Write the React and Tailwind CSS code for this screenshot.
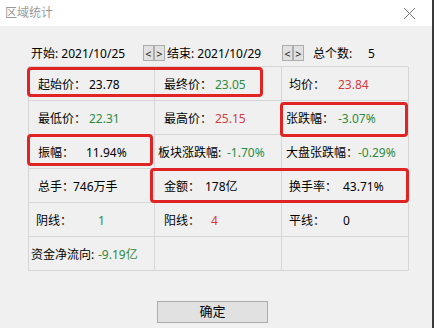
import React from "react";

const RED = "text-[#d23c3c]";
const GREEN = "text-[#2e8b3e]";

function Cell({ label, value, color = "text-black", pl, lw }) {
  return (
    <div className="h-[34px] flex items-center pt-[2px] border-r border-b border-[#d6d6d6] whitespace-nowrap" style={{ paddingLeft: pl }}>
      {label && (
        <span className="inline-block text-black" style={{ width: lw }}>
          {label}
        </span>
      )}
      {value && <span className={color}>{value}</span>}
    </div>
  );
}

function NavBtn({ children }) {
  return (
    <div className="w-[11px] h-[16px] bg-[#e1e1e1] border border-[#adadad] flex items-center justify-center text-[11px] text-[#222] leading-none">
      {children}
    </div>
  );
}

export default function App() {
  return (
    <div
      className="relative w-[434px] h-[328px] bg-[#f0f0f0] border-r-2 border-[#3a3a3a] overflow-hidden text-[12px]"
      style={{ fontFamily: '"Noto Sans", "Noto Sans CJK SC", sans-serif' }}
    >
      {/* title bar */}
      <div className="h-[26px] bg-white flex items-center justify-between pl-[5px] pr-[16px]">
        <span className="text-[#9a9a9a] text-[12px]">区域统计</span>
        <svg width="13" height="13" viewBox="0 0 13 13">
          <path d="M1 1 L12 12 M12 1 L1 12" stroke="#7a7a7a" strokeWidth="1" />
        </svg>
      </div>

      {/* top row */}
      <div className="flex items-center h-[16px] mt-[19px] pl-[31px] whitespace-nowrap text-black">
        <span className="w-[112px] pt-[2px]">开始: 2021/10/25</span>
        <NavBtn>&lt;</NavBtn>
        <NavBtn>&gt;</NavBtn>
        <span className="w-[115px] ml-[2px] pt-[2px]">结束: 2021/10/29</span>
        <NavBtn>&lt;</NavBtn>
        <NavBtn>&gt;</NavBtn>
        <span className="w-[55px] ml-[9px] pt-[2px]">总个数:</span>
        <span className="pt-[2px]">5</span>
      </div>

      {/* table */}
      <div className="ml-[28px] mt-[5px] w-[380px] grid grid-cols-[126px_127px_127px] border-l border-t border-[#d6d6d6]">
        <Cell label="起始价：" value="23.78" pl={9} lw={51} />
        <Cell label="最终价：" value="23.05" color={GREEN} pl={9} lw={51} />
        <Cell label="均价：" value="23.84" color={RED} pl={7} lw={49} />

        <Cell label="最低价：" value="22.31" color={GREEN} pl={9} lw={51} />
        <Cell label="最高价：" value="25.15" color={RED} pl={9} lw={51} />
        <Cell label="张跌幅：" value="-3.07%" color={GREEN} pl={4} lw={52} />

        <Cell label="振幅：" value="11.94%" pl={9} lw={48} />
        <Cell label="板块涨跌幅:" value="-1.70%" color={GREEN} pl={3} lw={69} />
        <Cell label="大盘张跌幅：" value="-0.29%" color={GREEN} pl={4} lw={72} />

        <Cell label="总手：" value="746万手" pl={9} lw={35} />
        <Cell label="金额：" value="178亿" pl={9} lw={41} />
        <Cell label="换手率：" value="43.71%" pl={7} lw={54} />

        <Cell label="阴线：" value="1" color={GREEN} pl={7} lw={62} />
        <Cell label="阳线：" value="4" color={RED} pl={9} lw={47} />
        <Cell label="平线：" value="0" pl={7} lw={54} />

        <Cell label="资金净流向:" value="-9.19亿" color={GREEN} pl={2} lw={67} />
        <Cell />
        <Cell />
      </div>

      {/* OK button */}
      <div className="flex mt-[30px] pl-[157px]">
        <button className="w-[111px] h-[22px] bg-[#e1e1e1] border border-[#adadad] text-[13px] text-black flex items-center justify-center">
          确定
        </button>
      </div>

      {/* red annotation boxes */}
      <div className="absolute left-[27px] top-[67px] w-[236px] h-[30px] border-[3px] border-[#e02424] rounded-[4px]" />
      <div className="absolute left-[280px] top-[102px] w-[128px] h-[35px] border-[3px] border-[#e02424] rounded-[4px]" />
      <div className="absolute left-[27px] top-[134px] w-[126px] h-[32px] border-[3px] border-[#e02424] rounded-[4px]" />
      <div className="absolute left-[150px] top-[168px] w-[259px] h-[35px] border-[3px] border-[#e02424] rounded-[4px]" />
    </div>
  );
}
